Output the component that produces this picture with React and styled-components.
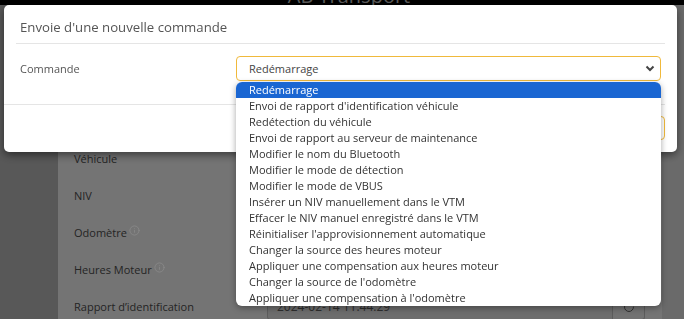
import React from 'react';
import styled, { createGlobalStyle } from 'styled-components';
import { Info, RotateCw } from 'lucide-react';

const GlobalStyle = createGlobalStyle`
  html, body { margin: 0; padding: 0; width: 684px; height: 319px; overflow: hidden; }
  body { font-family: "Open Sans", "Noto Sans", sans-serif; }
  * { box-sizing: border-box; }
`;

const Page = styled.div`
  display: flex;
  flex-direction: column;
  width: 684px;
  height: 319px;
  overflow: hidden;
  background: #c2c2c2;
`;

const TopBar = styled.header`
  height: 5px;
  flex: none;
  background: #000;
  overflow: hidden;
  display: flex;
  justify-content: center;
`;

const Brand = styled.div`
  font-size: 20px;
  line-height: 20px;
  margin-top: -14px;
  margin-left: 14px;
  color: #a8a8a8;
  white-space: nowrap;
`;

const Main = styled.div`
  flex: 1;
  display: flex;
`;

const Sidebar = styled.aside`
  width: 58px;
  flex: none;
  background: #a0a0a0;
`;

const Content = styled.section`
  width: 604px;
  flex: none;
  background: #d3d3d3;
  padding: 135px 0 0 16px;
`;

const FormRow = styled.div`
  display: flex;
  align-items: center;
  height: 37px;
`;

const RowLabel = styled.div`
  width: 193px;
  flex: none;
  display: flex;
  align-items: center;
  gap: 2px;
  font-size: 11px;
  font-weight: 500;
  color: #444;
  white-space: nowrap;
`;

const InfoIcon = styled(Info)`
  color: #ffffff;
  margin-top: -5px;
`;

const InputGroup = styled.div`
  display: flex;
  width: 378px;
  height: 26px;
`;

const TextInput = styled.div`
  flex: 1;
  border: 1px solid #a8a8a8;
  border-radius: 3px 0 0 3px;
  background: #c6c6c6;
  padding-left: 9px;
  font-size: 12px;
  color: #555;
  display: flex;
  align-items: center;
`;

const AddonButton = styled.div`
  width: 32px;
  border: 1px solid #a8a8a8;
  border-left: none;
  border-radius: 0 3px 3px 0;
  background: #cfcfcf;
  color: #5a5a5a;
  display: flex;
  align-items: center;
  justify-content: center;
`;

const Backdrop = styled.div`
  position: fixed;
  inset: 0;
  background: rgba(0, 0, 0, 0.45);
`;

const Modal = styled.div`
  position: fixed;
  top: 5px;
  left: 4px;
  width: 673px;
  background: #fff;
  border-radius: 5px;
  box-shadow: 0 3px 9px rgba(0, 0, 0, 0.5);
`;

const ModalHeader = styled.div`
  margin: 0 12px;
  padding: 12px 4px 6px;
  border-bottom: 1px solid #e5e5e5;
`;

const Title = styled.h4`
  margin: 0;
  font-size: 13.2px;
  line-height: 20px;
  font-weight: 400;
  color: #555;
`;

const ModalBody = styled.div`
  padding: 12px 16px 23px;
`;

const FieldRow = styled.div`
  display: flex;
  align-items: center;
`;

const FieldLabel = styled.label`
  width: 216px;
  flex: none;
  font-size: 11px;
  color: #555;
`;

const SelectWrap = styled.div`
  position: relative;
  flex: 1;
`;

const SelectBox = styled.div`
  height: 25px;
  border: 1px solid #f0b93b;
  border-radius: 4px;
  background: #fff;
  padding: 0 5px 0 12px;
  display: flex;
  align-items: center;
  justify-content: space-between;
  font-size: 11px;
  color: #444;
`;

const Dropdown = styled.ul`
  position: absolute;
  z-index: 10;
  top: calc(100% + 1px);
  left: 0;
  right: 0;
  margin: 0;
  padding: 0;
  list-style: none;
  background: #fff;
  border-radius: 6px;
  overflow: hidden;
  box-shadow: 0 2px 6px rgba(0, 0, 0, 0.35);
`;

const Option = styled.li`
  height: 16px;
  line-height: 16px;
  padding-left: 13px;
  font-size: 11px;
  white-space: nowrap;
  color: ${(p) => (p.$active ? '#fff' : '#333')};
  background: ${(p) => (p.$active ? '#1a66d2' : 'transparent')};
`;

const ModalFooter = styled.div`
  margin-right: 12px;
  border-top: 1px solid #e5e5e5;
  padding: 11px 0 12px;
  display: flex;
  justify-content: flex-end;
  gap: 6px;
`;

const FooterButton = styled.button`
  height: 24px;
  padding: 0 12px;
  border-radius: 4px;
  background: #fff;
  font-family: inherit;
  font-size: 11px;
  color: #555;
  border: 1px solid ${(p) => (p.$primary ? '#f0b93b' : '#ccc')};
`;

const options = [
  'Redémarrage',
  "Envoi de rapport d'identification véhicule",
  'Redétection du véhicule',
  'Envoi de rapport au serveur de maintenance',
  'Modifier le nom du Bluetooth',
  'Modifier le mode de détection',
  'Modifier le mode de VBUS',
  'Insérer un NIV manuellement dans le VTM',
  'Effacer le NIV manuel enregistré dans le VTM',
  "Réinitialiser l'approvisionnement automatique",
  'Changer la source des heures moteur',
  'Appliquer une compensation aux heures moteur',
  "Changer la source de l'odomètre",
  "Appliquer une compensation à l'odomètre",
];

const rows = [
  { label: 'Véhicule' },
  { label: 'NIV' },
  { label: 'Odomètre', info: true },
  { label: 'Heures Moteur', info: true },
  { label: 'Rapport d’identification', value: '2024-02-14 11:44:29', refresh: true },
];

const Chevron = () => (
  <svg width="10" height="7" viewBox="0 0 10 7">
    <path d="M1.5 1.5 L5 5 L8.5 1.5" fill="none" stroke="#444" strokeWidth="2" />
  </svg>
);

export default function App() {
  return (
    <>
      <GlobalStyle />
      <Page>
        <TopBar>
          <Brand>AB Transport</Brand>
        </TopBar>
        <Main>
          <Sidebar />
          <Content>
            {rows.map((r) => (
              <FormRow key={r.label}>
                <RowLabel>
                  {r.label}
                  {r.info && <InfoIcon size={11} strokeWidth={1.6} />}
                </RowLabel>
                <InputGroup>
                  <TextInput>{r.value || ''}</TextInput>
                  {r.refresh && (
                    <AddonButton>
                      <RotateCw size={12} />
                    </AddonButton>
                  )}
                </InputGroup>
              </FormRow>
            ))}
          </Content>
        </Main>
      </Page>
      <Backdrop />
      <Modal>
        <ModalHeader>
          <Title>Envoie d'une nouvelle commande</Title>
        </ModalHeader>
        <ModalBody>
          <FieldRow>
            <FieldLabel>Commande</FieldLabel>
            <SelectWrap>
              <SelectBox>
                <span>Redémarrage</span>
                <Chevron />
              </SelectBox>
              <Dropdown>
                {options.map((o, i) => (
                  <Option key={o} $active={i === 0}>
                    {o}
                  </Option>
                ))}
              </Dropdown>
            </SelectWrap>
          </FieldRow>
        </ModalBody>
        <ModalFooter>
          <FooterButton>Annuler</FooterButton>
          <FooterButton $primary>Envoyer</FooterButton>
        </ModalFooter>
      </Modal>
    </>
  );
}
